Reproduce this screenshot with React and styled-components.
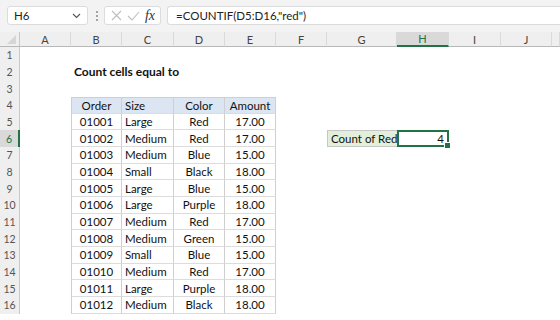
import React from "react";
import styled, { createGlobalStyle } from "styled-components";

const GlobalStyle = createGlobalStyle`
  html, body {
    margin: 0;
    padding: 0;
    background: #ffffff;
  }
  body {
    font-family: Lato, "Noto Sans", sans-serif;
  }
`;

const COLS = [51, 51, 52, 51, 51, 51, 70, 52, 52, 51];
const LETTERS = ["A", "B", "C", "D", "E", "F", "G", "H", "I", "J"];
const ROW_H = 16.67;

const orders = [
  ["01001", "Large", "Red", "17.00"],
  ["01002", "Medium", "Red", "17.00"],
  ["01003", "Medium", "Blue", "15.00"],
  ["01004", "Small", "Black", "18.00"],
  ["01005", "Large", "Blue", "15.00"],
  ["01006", "Large", "Purple", "18.00"],
  ["01007", "Medium", "Red", "17.00"],
  ["01008", "Medium", "Green", "15.00"],
  ["01009", "Small", "Blue", "15.00"],
  ["01010", "Medium", "Red", "17.00"],
  ["01011", "Large", "Purple", "18.00"],
  ["01012", "Medium", "Black", "18.00"],
];

const Window = styled.div`
  width: 560px;
  height: 320px;
  overflow: hidden;
  background: #ffffff;
`;

const Toolbar = styled.div`
  height: 32px;
  box-sizing: border-box;
  background: #f3f3f3;
  display: flex;
  align-items: flex-start;
  padding: 6px 0 0 7px;
`;

const Box = styled.div`
  height: 19px;
  box-sizing: border-box;
  background: #ffffff;
  border: 1px solid #dcdcdc;
  border-radius: 3px;
  display: flex;
  align-items: center;
  font-size: 11.5px;
  color: #222;
`;

const NameBox = styled(Box)`
  width: 81px;
  padding: 0 6px;
  justify-content: space-between;
`;

const FxBox = styled(Box)`
  width: 57px;
  margin-left: 5px;
  padding: 0 5px 0 6px;
  justify-content: space-between;
`;

const FormulaBox = styled(Box)`
  flex: 1;
  margin-left: 6px;
  padding-left: 8px;
  border-right: none;
  border-radius: 3px 0 0 3px;
`;

const Fx = styled.span`
  font-family: "Liberation Serif", serif;
  font-style: italic;
  font-size: 14px;
  color: #333;
`;

const Grid = styled.div`
  display: grid;
  grid-template-columns: 20px ${COLS.map((w) => w + "px").join(" ")} 1fr;
  grid-template-rows: 15px repeat(16, ${ROW_H}px);
`;

const Corner = styled.div`
  background: #efefef;
  border-bottom: 1px solid #b8b8b8;
  border-right: 1px solid #c8c8c8;
  box-sizing: border-box;
  position: relative;
  &::after {
    content: "";
    position: absolute;
    right: 3px;
    bottom: 2px;
    border-style: solid;
    border-width: 0 0 9px 9px;
    border-color: transparent transparent #d6d6d6 transparent;
  }
`;

const ColHead = styled.div`
  background: ${(p) => (p.$active ? "#d9d9d9" : "#efefef")};
  color: ${(p) => (p.$active ? "#217346" : "#444")};
  border-bottom: ${(p) => (p.$active ? "2px solid #217346" : "1px solid #b8b8b8")};
  border-right: 1px solid #dadada;
  box-sizing: border-box;
  display: flex;
  align-items: center;
  justify-content: center;
  font-size: 11px;
`;

const RowHead = styled.div`
  background: ${(p) => (p.$active ? "#d9d9d9" : "#efefef")};
  color: ${(p) => (p.$active ? "#217346" : "#555")};
  border-right: ${(p) => (p.$active ? "2px solid #217346" : "1px solid #c8c8c8")};
  box-sizing: border-box;
  display: flex;
  align-items: center;
  justify-content: center;
  font-size: 10.5px;
`;

const Cell = styled.div`
  box-sizing: border-box;
  display: flex;
  align-items: center;
  justify-content: ${(p) => p.$align || "flex-start"};
  padding: 0 3px;
  font-size: 11.5px;
  color: #111;
  white-space: nowrap;
  position: relative;
`;

const Title = styled(Cell)`
  grid-column: span 3;
  font-weight: 700;
  font-size: 12px;
`;

const TableCell = styled(Cell)`
  background: ${(p) => (p.$head ? "#dce5f2" : "#ffffff")};
  border-right: 1px solid #cfcfcf;
  border-bottom: 1px solid #dcdcdc;
  border-left: ${(p) => (p.$first ? "1px solid #cfcfcf" : "none")};
  border-top: ${(p) => (p.$head ? "1px solid #cfcfcf" : "none")};
`;

const LabelCell = styled(Cell)`
  background: #e2efda;
  border: 1px solid #c6c6c6;
  border-right: none;
`;

const ActiveCell = styled(Cell)`
  border: 2px solid #217346;
  justify-content: flex-end;
  &::after {
    content: "";
    position: absolute;
    right: -4px;
    bottom: -4px;
    width: 5px;
    height: 5px;
    background: #217346;
    border: 1px solid #ffffff;
  }
`;

const Chevron = () => (
  <svg width="9" height="6" viewBox="0 0 9 6">
    <path d="M1 1 L4.5 4.5 L8 1" fill="none" stroke="#555" strokeWidth="1.1" />
  </svg>
);

const Dots = () => (
  <svg width="4" height="12" viewBox="0 0 4 12" style={{ marginLeft: 7, marginTop: 4 }}>
    <circle cx="2" cy="2" r="1" fill="#888" />
    <circle cx="2" cy="6" r="1" fill="#888" />
    <circle cx="2" cy="10" r="1" fill="#888" />
  </svg>
);

const Cross = () => (
  <svg width="11" height="11" viewBox="0 0 11 11">
    <path d="M1 1 L10 10 M10 1 L1 10" stroke="#bdbdbd" strokeWidth="1.1" />
  </svg>
);

const Check = () => (
  <svg width="13" height="10" viewBox="0 0 13 10">
    <path d="M1 5 L5 9 L12 1" fill="none" stroke="#bdbdbd" strokeWidth="1.1" />
  </svg>
);

function tableCells(row) {
  // rows 4..16 hold the table in columns B..E
  if (row === 4) {
    return [
      ["Order", "center"],
      ["Size", "flex-start"],
      ["Color", "center"],
      ["Amount", "center"],
    ].map(([t, a], i) => (
      <TableCell key={i} $head $first={i === 0} $align={a}>
        {t}
      </TableCell>
    ));
  }
  const d = orders[row - 5];
  const aligns = ["center", "flex-start", "center", "center"];
  return d.map((t, i) => (
    <TableCell key={i} $first={i === 0} $align={aligns[i]}>
      {t}
    </TableCell>
  ));
}

function renderRow(row) {
  const cells = [<RowHead key="h" $active={row === 6}>{row}</RowHead>];
  if (row === 2) {
    cells.push(<Cell key="a" />);
    cells.push(<Title key="b">Count cells equal to</Title>);
    for (let i = 0; i < 7; i++) cells.push(<Cell key={"e" + i} />);
    return cells;
  }
  if (row >= 4) {
    cells.push(<Cell key="a" />);
    cells.push(...tableCells(row));
    cells.push(<Cell key="f" />);
    if (row === 6) {
      cells.push(<LabelCell key="g">Count of Red</LabelCell>);
      cells.push(<ActiveCell key="h">4</ActiveCell>);
    } else {
      cells.push(<Cell key="g" />, <Cell key="h" />);
    }
    cells.push(<Cell key="i" />, <Cell key="j" />, <Cell key="k" />);
    return cells;
  }
  for (let i = 0; i < 11; i++) cells.push(<Cell key={"e" + i} />);
  return cells;
}

export default function App() {
  const rows = Array.from({ length: 16 }, (_, i) => i + 1);
  return (
    <>
      <GlobalStyle />
      <Window>
        <Toolbar>
          <NameBox>
            <span>H6</span>
            <Chevron />
          </NameBox>
          <Dots />
          <FxBox>
            <Cross />
            <Check />
            <Fx>fx</Fx>
          </FxBox>
          <FormulaBox>=COUNTIF(D5:D16,"red")</FormulaBox>
        </Toolbar>
        <Grid>
          <Corner />
          {LETTERS.map((l) => (
            <ColHead key={l} $active={l === "H"}>
              {l}
            </ColHead>
          ))}
          <ColHead />
          {rows.map((r) => renderRow(r))}
        </Grid>
      </Window>
    </>
  );
}
